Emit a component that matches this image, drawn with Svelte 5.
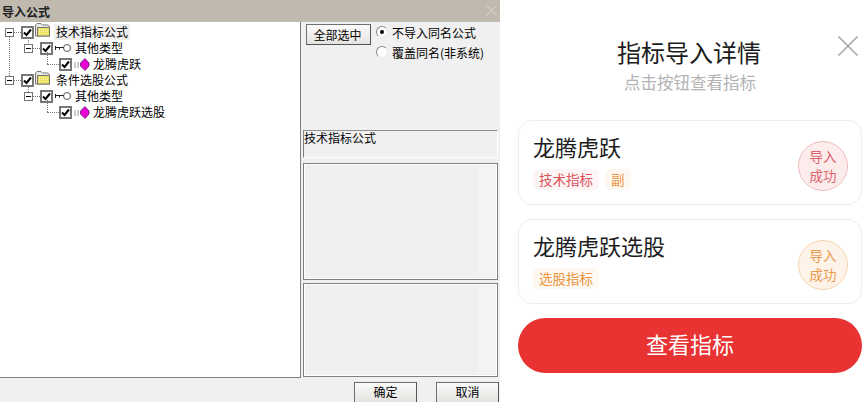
<script>
  const tree = [
    { level: 0, icon: 'folder', label: '技术指标公式', active: true },
    { level: 1, icon: 'key', label: '其他类型' },
    { level: 2, icon: 'gem', label: '龙腾虎跃' },
    { level: 0, icon: 'folder', label: '条件选股公式' },
    { level: 1, icon: 'key', label: '其他类型' },
    { level: 2, icon: 'gem', label: '龙腾虎跃选股' }
  ];

  const results = [
    { name: '龙腾虎跃', tone: 'red', tags: [{ text: '技术指标', tone: 'red' }, { text: '副', tone: 'orange' }] },
    { name: '龙腾虎跃选股', tone: 'orange', tags: [{ text: '选股指标', tone: 'orange' }] }
  ];
</script>

<div class="page">
  <section class="dialog">
    <header class="titlebar">
      <span>导入公式</span>
      <svg class="dlg-close" width="13" height="13" viewBox="0 0 13 13"><path d="M1 1l11 11M12 1L1 12" stroke="#d8d5cf" fill="none" /></svg>
    </header>
    <div class="dlg-body">
      <div class="tree">
        <i class="vline v0"></i>
        <i class="vline v1"></i>
        <i class="vline v2"></i>
        <i class="vline v3"></i>
        <i class="vline v4"></i>
        {#each tree as row, idx}
          <div class="row lv{row.level}">
            {#if row.level < 2}
              <span class="expander"><i></i></span><span class="dots"></span>
            {:else}
              <span class="dots long"></span>
            {/if}
            <span class="check">
              <svg width="9" height="9" viewBox="0 0 9 9"><path d="M1 4.500l2.500 2.500L8 1.500" stroke="#000" stroke-width="2" fill="none" /></svg>
            </span>
            {#if row.icon === 'folder'}
              <svg class="ico" width="16" height="14" viewBox="0 0 16 14">
                <defs>
                  <pattern id="dither{idx}" width="2" height="2" patternUnits="userSpaceOnUse">
                    <rect width="2" height="2" fill="#e8e05a" />
                    <rect width="1" height="1" fill="#fffbc0" />
                  </pattern>
                </defs>
                <path d="M0.500 13V2L2 0.500h4L7.500 2H13l1.500 1.500V13z" fill="#e8e8e4" stroke="#77776f" />
                <rect x="2.500" y="4.500" width="12" height="8.500" fill="url(#dither{idx})" stroke="#77776f" />
              </svg>
            {:else if row.icon === 'key'}
              <svg class="ico" width="16" height="10" viewBox="0 0 16 10">
                <circle cx="12" cy="5" r="3.500" fill="#fff" stroke="#555" />
                <path d="M0.500 3v4M8.500 4.500H1M4.500 4.500v2" stroke="#222" fill="none" />
              </svg>
            {:else}
              <svg class="ico" width="16" height="13" viewBox="0 0 16 13">
                <path d="M0 5h5M0 7h5M0 9h5" stroke="#999" stroke-dasharray="2 1" />
                <path d="M11 0.500l4 4.500v3l-4 4.500-4.500-4.500v-3z" fill="#e600d2" stroke="#6b1070" stroke-width="0.800" />
              </svg>
            {/if}
            <span class="label" class:active={row.active}>{row.label}</span>
          </div>
        {/each}
      </div>

      <div class="side">
        <div class="side-top">
          <button class="win-btn all">全部选中</button>
          <div class="radios">
            <label class="radio"><span class="dot on"></span>不导入同名公式</label>
            <label class="radio"><span class="dot"></span>覆盖同名(非系统)</label>
          </div>
        </div>
        <div class="sunken info">技术指标公式</div>
        <div class="sunken preview"><i></i></div>
        <div class="sunken notes"><i></i></div>
      </div>
    </div>
    <footer class="dlg-foot">
      <button class="win-btn ok">确定</button>
      <button class="win-btn ok">取消</button>
    </footer>
  </section>

  <section class="detail">
    <svg class="close" width="22" height="22" viewBox="0 0 22 22"><path d="M1.500 1.500l19 19M20.500 1.500l-19 19" stroke="#a3a3a3" stroke-width="1.500" fill="none" /></svg>
    <h1>指标导入详情</h1>
    <p class="hint">点击按钮查看指标</p>
    <div class="cards">
      {#each results as item}
        <article class="card">
          <div class="card-main">
            <h2>{item.name}</h2>
            <div class="tags">
              {#each item.tags as tag}
                <span class="tag {tag.tone}">{tag.text}</span>
              {/each}
            </div>
          </div>
          <div class="stamp {item.tone}">导入<br />成功</div>
        </article>
      {/each}
    </div>
    <button class="view">查看指标</button>
  </section>
</div>

<style>
  :global(body) {
    margin: 0;
    background: #fff;
  }

  .page {
    display: flex;
    align-items: flex-start;
    width: 867px;
    height: 405px;
    overflow: hidden;
    font-family: "Noto Sans CJK SC", "Noto Sans", sans-serif;
  }

  .dialog {
    width: 500px;
    height: 402px;
    overflow: hidden;
    display: flex;
    flex-direction: column;
    background: #f0f0f0;
    color: #000;
    font-size: 12px;
  }

  .titlebar {
    position: relative;
    height: 22px;
    flex: none;
    display: flex;
    align-items: center;
    padding-left: 2px;
    background: #bfb9ae;
    font-weight: 700;
    font-size: 12px;
    color: #222;
  }

  .dlg-close {
    position: absolute;
    right: 2px;
    top: 4px;
  }

  .dlg-body {
    display: flex;
    height: 356px;
    flex: none;
  }

  .tree {
    position: relative;
    width: 301px;
    box-sizing: border-box;
    padding-top: 2px;
    background: #fff;
    border-right: 1px solid #808080;
    border-bottom: 1px solid #808080;
    margin-right: 2px;
  }

  .vline {
    position: absolute;
    width: 0;
    border-left: 1px dotted #777;
  }

  .v0 { left: 9px; top: 15px; height: 39px; }
  .v1 { left: 28px; top: 16px; height: 5px; }
  .v2 { left: 47px; top: 30px; height: 12px; }
  .v3 { left: 28px; top: 64px; height: 6px; }
  .v4 { left: 47px; top: 78px; height: 12px; }

  .row {
    display: flex;
    align-items: center;
    height: 16px;
  }

  .lv0 { padding-left: 5px; }
  .lv1 { padding-left: 24px; }
  .lv2 { padding-left: 47px; }

  .expander {
    position: relative;
    z-index: 1;
    width: 9px;
    height: 9px;
    box-sizing: border-box;
    border: 1px solid #777;
    background: #fff;
  }

  .expander i {
    position: absolute;
    left: 1px;
    top: 3px;
    width: 5px;
    height: 1px;
    background: #000;
  }

  .dots {
    width: 7px;
    border-top: 1px dotted #777;
  }

  .dots.long {
    width: 12px;
  }

  .check {
    flex: none;
    width: 13px;
    height: 13px;
    box-sizing: border-box;
    border: 2px solid #777;
    background: #fff;
    display: flex;
    align-items: center;
    justify-content: center;
  }

  .check svg {
    flex: none;
  }

  .ico {
    flex: none;
    margin-left: 2px;
  }

  .lv0 .ico {
    margin-left: 1px;
    margin-top: -4px;
  }

  .label {
    margin-left: 3px;
    padding: 0 2px;
    line-height: 16px;
    white-space: nowrap;
  }

  .lv1 .label {
    margin-left: 2px;
  }

  .lv2 .label {
    margin-left: 1px;
  }

  .label.active {
    background: #f0f0f0;
  }

  .side {
    width: 195px;
    display: flex;
    flex-direction: column;
  }

  .side-top {
    height: 106px;
    padding-top: 2px;
    display: flex;
    gap: 5px;
    flex: none;
  }

  .win-btn {
    box-sizing: border-box;
    padding: 0;
    font: inherit;
    color: #000;
    border: 1px solid #6f6f6f;
    border-right-color: #555;
    border-bottom-color: #555;
    background: linear-gradient(#fbfbfb, #e4e3e0);
  }

  .all {
    margin-left: 3px;
    width: 65px;
    height: 21px;
    padding-right: 2px;
    line-height: 16px;
  }

  .radios {
    display: flex;
    flex-direction: column;
    gap: 4px;
  }

  .radio {
    display: flex;
    align-items: center;
    height: 16px;
    gap: 4px;
    white-space: nowrap;
  }

  .dot {
    position: relative;
    width: 12px;
    height: 12px;
    box-sizing: border-box;
    border-radius: 50%;
    border: 1px solid #8a8a8a;
    border-right-color: #e8e8e8;
    border-bottom-color: #e8e8e8;
    background: #fff;
  }

  .dot.on::after {
    content: "";
    position: absolute;
    left: 3px;
    top: 3px;
    width: 4px;
    height: 4px;
    border-radius: 50%;
    background: #000;
  }

  .sunken {
    position: relative;
    box-sizing: border-box;
    width: 195px;
    flex: none;
    border: 1px solid #808080;
    border-right-color: #fff;
    border-bottom-color: #fff;
  }

  .info {
    height: 28px;
    line-height: 13px;
    border-top-color: #909090;
    margin-bottom: 5px;
  }

  .preview {
    height: 117px;
    margin-bottom: 3px;
    border-bottom-color: #808080;
    border-right-color: #808080;
    box-shadow: inset -1px -1px 0 #fff, inset 1px 1px 0 #fff;
  }

  .notes {
    height: 94px;
    border-color: #808080;
    box-shadow: inset 1px 1px 0 #fff, inset -1px -1px 0 #fff;
  }

  .preview i,
  .notes i {
    position: absolute;
    top: 2px;
    right: 1px;
    bottom: 2px;
    width: 18px;
    background: #f3f3f1;
  }

  .dlg-foot {
    display: flex;
    justify-content: flex-end;
    gap: 19px;
    padding: 4px 1px 0 0;
  }

  .ok {
    width: 63px;
    height: 20px;
    padding-bottom: 2px;
    line-height: 16px;
    border-width: 1px 1px 0 1px;
  }

  .detail {
    position: relative;
    width: 344px;
    padding: 0 5px 0 18px;
    display: flex;
    flex-direction: column;
    align-items: stretch;
    background: #fff;
    text-align: center;
  }

  .close {
    position: absolute;
    left: 337px;
    top: 35px;
  }

  h1 {
    margin: 36px 0 0;
    padding-right: 2px;
    font-size: 24px;
    font-weight: 400;
    line-height: 32px;
    color: #1c1c1c;
  }

  .hint {
    margin: 6px 0 0;
    font-size: 16.5px;
    line-height: 16px;
    color: #b3b3b3;
  }

  .cards {
    display: flex;
    flex-direction: column;
    gap: 14px;
    margin-top: 30px;
  }

  .card {
    box-sizing: border-box;
    height: 85px;
    display: flex;
    justify-content: space-between;
    padding: 0 13px 0 14px;
    border: 1px solid #eeeeee;
    border-radius: 14px;
    text-align: left;
  }

  h2 {
    margin: 10px 0 0;
    font-size: 22px;
    font-weight: 400;
    line-height: 30px;
    color: #1c1c1c;
  }

  .tags {
    display: flex;
    gap: 6px;
    margin-top: 8px;
  }

  .tag {
    height: 21px;
    padding: 0 6px;
    border-radius: 5px;
    font-size: 13.5px;
    line-height: 21px;
  }

  .tag.red {
    color: #e0525a;
    background: #fdf5f5;
  }

  .tag.orange {
    color: #ea9440;
    background: #fef8f2;
  }

  .stamp {
    box-sizing: border-box;
    width: 50px;
    height: 50px;
    margin-top: 20px;
    border-radius: 50%;
    font-size: 13.5px;
    line-height: 19px;
    padding-top: 5px;
    text-align: center;
  }

  .stamp.red {
    color: #e0626a;
    background: #fcecec;
    border: 1px solid #f0bcbf;
  }

  .stamp.orange {
    color: #ea9a4c;
    background: #fef3e9;
    border: 1px solid #f6d4b0;
  }

  .view {
    height: 55px;
    margin-top: 14px;
    padding: 0 0 5px;
    border: 0;
    border-radius: 28px;
    background: #e93232;
    color: #fff;
    font: inherit;
    font-size: 22px;
  }
</style>
